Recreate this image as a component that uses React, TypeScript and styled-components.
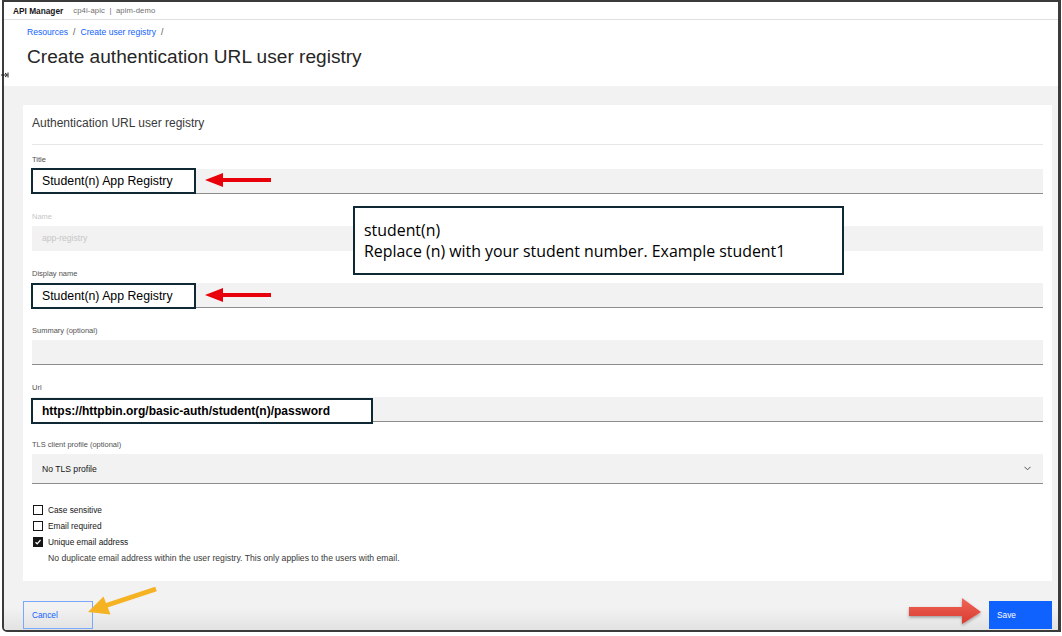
import React from "react";
import styled, { createGlobalStyle } from "styled-components";

const GlobalStyle = createGlobalStyle`
  html, body { margin: 0; padding: 0; background: #ffffff; }
  body { font-family: "Liberation Sans", Arial, sans-serif; color: #161616; }
  * { box-sizing: border-box; }
`;

const Page = styled.div`
  position: relative;
  width: 1062px;
  height: 636px;
  overflow: hidden;
`;

const Frame = styled.div`
  margin-left: 2px;
  width: 1059px;
  height: 632px;
  border: 2px solid #3b3b3b;
  border-right-width: 3px;
  border-bottom-left-radius: 5px;
  display: flex;
  flex-direction: column;
  background: #ffffff;
  overflow: hidden;
`;

const TopBar = styled.header`
  height: 18px;
  border-bottom: 1px solid #e0e0e0;
  display: flex;
  align-items: center;
  gap: 10px;
  padding-left: 9px;
  flex-shrink: 0;
`;

const Brand = styled.span`
  font-size: 8.3px;
  font-weight: 700;
  color: #161616;
`;

const Context = styled.span`
  font-size: 7.7px;
  color: #6f6f6f;
  letter-spacing: 0.1px;
`;

const PageHeader = styled.div`
  height: 66px;
  padding: 6px 0 0 23px;
  flex-shrink: 0;
`;

const Breadcrumb = styled.nav`
  font-size: 8.6px;
  line-height: 12px;
  color: #0f62fe;
  display: flex;
  gap: 5px;
`;

const Sep = styled.span`
  color: #525252;
`;

const PageTitle = styled.h1`
  margin: 7px 0 0;
  font-size: 19.1px;
  line-height: 24px;
  font-weight: 400;
  color: #262626;
`;

const Main = styled.main`
  flex: 1;
  padding: 19px 6px 0 19px;
  background: linear-gradient(#f2f2f2 calc(100% - 22px), #e2e2e2);
  display: flex;
  flex-direction: column;
`;

const Card = styled.section`
  background: #ffffff;
  padding: 10px 9px 15px;
`;

const CardTitle = styled.h2`
  margin: 0;
  font-size: 12px;
  line-height: 16px;
  font-weight: 400;
  color: #393939;
  padding-bottom: 13px;
  border-bottom: 1px solid #e6e6e6;
`;

const Form = styled.div`
  padding-top: 8px;
  display: flex;
  flex-direction: column;
  gap: 16px;
`;

const FieldWrap = styled.div`
  display: flex;
  flex-direction: column;
`;

const Label = styled.label<{ $disabled?: boolean }>`
  font-size: 7.5px;
  line-height: 13px;
  margin-bottom: 3px;
  color: ${(p) => (p.$disabled ? "#c6c6c6" : "#525252")};
`;

const Input = styled.div<{ $disabled?: boolean; $tall?: boolean }>`
  height: ${(p) => (p.$tall ? 30 : 25)}px;
  background: #f2f2f2;
  border-bottom: 1px solid ${(p) => (p.$disabled ? "transparent" : "#8d8d8d")};
  display: flex;
  align-items: center;
  justify-content: space-between;
  padding: 0 12px 0 10px;
  font-size: 8.6px;
  color: ${(p) => (p.$disabled ? "#c6c6c6" : "#161616")};
`;

const Checks = styled.div`
  margin-top: 18px;
  display: flex;
  flex-direction: column;
`;

const CheckRow = styled.div`
  display: flex;
  align-items: center;
  gap: 5px;
  height: 16px;
  padding-left: 1px;
  font-size: 8.3px;
  color: #161616;
`;

const Box = styled.span<{ $checked?: boolean }>`
  width: 10px;
  height: 10px;
  border: 1px solid #161616;
  background: ${(p) => (p.$checked ? "#161616" : "#ffffff")};
  display: inline-flex;
  align-items: center;
  justify-content: center;
`;

const Help = styled.div`
  padding-left: 16px;
  height: 16px;
  line-height: 16px;
  font-size: 8.65px;
  color: #393939;
`;

const Footer = styled.footer`
  padding-top: 20px;
  display: flex;
  justify-content: space-between;
  align-items: flex-start;
`;

const Button = styled.button<{ $primary?: boolean }>`
  height: 28px;
  width: ${(p) => (p.$primary ? 63 : 70)}px;
  padding: 0 0 0 8px;
  text-align: left;
  font-family: inherit;
  font-size: 8.3px;
  border: ${(p) => (p.$primary ? "none" : "1.5px solid #78a9ff")};
  background: ${(p) => (p.$primary ? "#0f62fe" : "transparent")};
  color: ${(p) => (p.$primary ? "#ffffff" : "#0f62fe")};
`;

/* ---------- overlay annotations ---------- */

const Overlay = styled.div`
  position: absolute;
  inset: 0;
  pointer-events: none;
`;

const Callout = styled.div<{ $x: number; $y: number; $w: number; $h: number }>`
  position: absolute;
  left: ${(p) => p.$x}px;
  top: ${(p) => p.$y}px;
  width: ${(p) => p.$w}px;
  height: ${(p) => p.$h}px;
  border: 2px solid #0e2933;
  background: #ffffff;
  display: flex;
  align-items: center;
  padding-left: 9px;
  font-size: 12.3px;
  color: #000000;
`;

const UrlCallout = styled(Callout)`
  font-weight: 700;
  font-size: 12px;
`;

const Note = styled.div`
  position: absolute;
  left: 353px;
  top: 206px;
  width: 491px;
  height: 69px;
  border: 2px solid #0e2933;
  background: #ffffff;
  padding: 12px 0 0 9px;
  font-family: "Open Sans", "Liberation Sans", sans-serif;
  font-size: 15.9px;
  line-height: 21px;
  color: #000000;
`;

const Drawing = styled.svg<{ $x: number; $y: number }>`
  position: absolute;
  left: ${(p) => p.$x}px;
  top: ${(p) => p.$y}px;
  overflow: visible;
`;

const RedArrow = ({ x, y }: { x: number; y: number }) => (
  <Drawing $x={x} $y={y} width="66" height="16" viewBox="0 0 66 16">
    <rect x="16" y="6" width="50" height="4" fill="#e8000b" />
    <polygon points="0,8 18,1 18,15" fill="#e8000b" />
  </Drawing>
);

const Chevron = () => (
  <svg width="7" height="5" viewBox="0 0 7 5">
    <path d="M0.5 0.8 L3.5 3.8 L6.5 0.8" fill="none" stroke="#525252" strokeWidth="1" />
  </svg>
);

const Check = () => (
  <svg width="8" height="8" viewBox="0 0 8 8">
    <path d="M1.5 4.2 L3.2 5.8 L6.5 2" fill="none" stroke="#ffffff" strokeWidth="1.2" />
  </svg>
);

const Field = ({
  label,
  value,
  disabled,
  tall,
  children,
}: {
  label: string;
  value?: string;
  disabled?: boolean;
  tall?: boolean;
  children?: React.ReactNode;
}) => (
  <FieldWrap>
    <Label $disabled={disabled}>{label}</Label>
    <Input $disabled={disabled} $tall={tall}>
      <span>{value}</span>
      {children}
    </Input>
  </FieldWrap>
);

export default function App() {
  return (
    <Page>
      <GlobalStyle />
      <Frame>
        <TopBar>
          <Brand>API Manager</Brand>
          <Context>cp4i-apic&nbsp; |&nbsp; apim-demo</Context>
        </TopBar>
        <PageHeader>
          <Breadcrumb>
            <span>Resources</span>
            <Sep>/</Sep>
            <span>Create user registry</span>
            <Sep>/</Sep>
          </Breadcrumb>
          <PageTitle>Create authentication URL user registry</PageTitle>
        </PageHeader>
        <Main>
          <Card>
            <CardTitle>Authentication URL user registry</CardTitle>
            <Form>
              <Field label="Title" value="" />
              <Field label="Name" value="app-registry" disabled />
              <Field label="Display name" value="" />
              <Field label="Summary (optional)" value="" />
              <Field label="Url" value="" />
              <Field label="TLS client profile (optional)" value="No TLS profile" tall>
                <Chevron />
              </Field>
            </Form>
            <Checks>
              <CheckRow>
                <Box />
                Case sensitive
              </CheckRow>
              <CheckRow>
                <Box />
                Email required
              </CheckRow>
              <CheckRow>
                <Box $checked>
                  <Check />
                </Box>
                Unique email address
              </CheckRow>
              <Help>
                No duplicate email address within the user registry. This only applies to the users with email.
              </Help>
            </Checks>
          </Card>
          <Footer>
            <Button>Cancel</Button>
            <Button $primary>Save</Button>
          </Footer>
        </Main>
      </Frame>

      <Overlay>
        <Drawing $x={1} $y={71} width="8" height="8" viewBox="0 0 8 8">
          <path d="M0 4 H6 M4 2 L6.5 4 L4 6 M7 1.5 V6.5" fill="none" stroke="#222" strokeWidth="1" />
        </Drawing>

        <Callout $x={31} $y={168} $w={165} $h={26}>Student(n) App Registry</Callout>
        <RedArrow x={205} y={172} />

        <Note>
          student(n)
          <br />
          Replace (n) with your student number. Example student1
        </Note>

        <Callout $x={31} $y={283} $w={165} $h={26}>Student(n) App Registry</Callout>
        <RedArrow x={205} y={287} />

        <UrlCallout $x={31} $y={398} $w={342} $h={26}>
          https://httpbin.org/basic-auth/student(n)/password
        </UrlCallout>

        <Drawing $x={85} $y={585} width="75" height="32" viewBox="0 0 75 32">
          <line x1="71" y1="4" x2="21" y2="20.5" stroke="#f5b223" strokeWidth="5" />
          <polygon points="3,27 25.5,29.5 18.5,11.5" fill="#f5b223" />
        </Drawing>

        <Drawing $x={905} $y={594} width="82" height="36" viewBox="0 0 82 36">
          <defs>
            <linearGradient id="rg" x1="0" y1="0" x2="0" y2="1">
              <stop offset="0" stopColor="#f0665a" />
              <stop offset="1" stopColor="#d93a2e" />
            </linearGradient>
            <filter id="sh" x="-20%" y="-20%" width="140%" height="160%">
              <feDropShadow dx="0" dy="1.5" stdDeviation="1.5" floodColor="#000" floodOpacity="0.35" />
            </filter>
          </defs>
          <polygon
            points="4,13 57,13 57,4 76,18 57,30 57,22 4,22"
            fill="url(#rg)"
            filter="url(#sh)"
          />
        </Drawing>
      </Overlay>
    </Page>
  );
}
